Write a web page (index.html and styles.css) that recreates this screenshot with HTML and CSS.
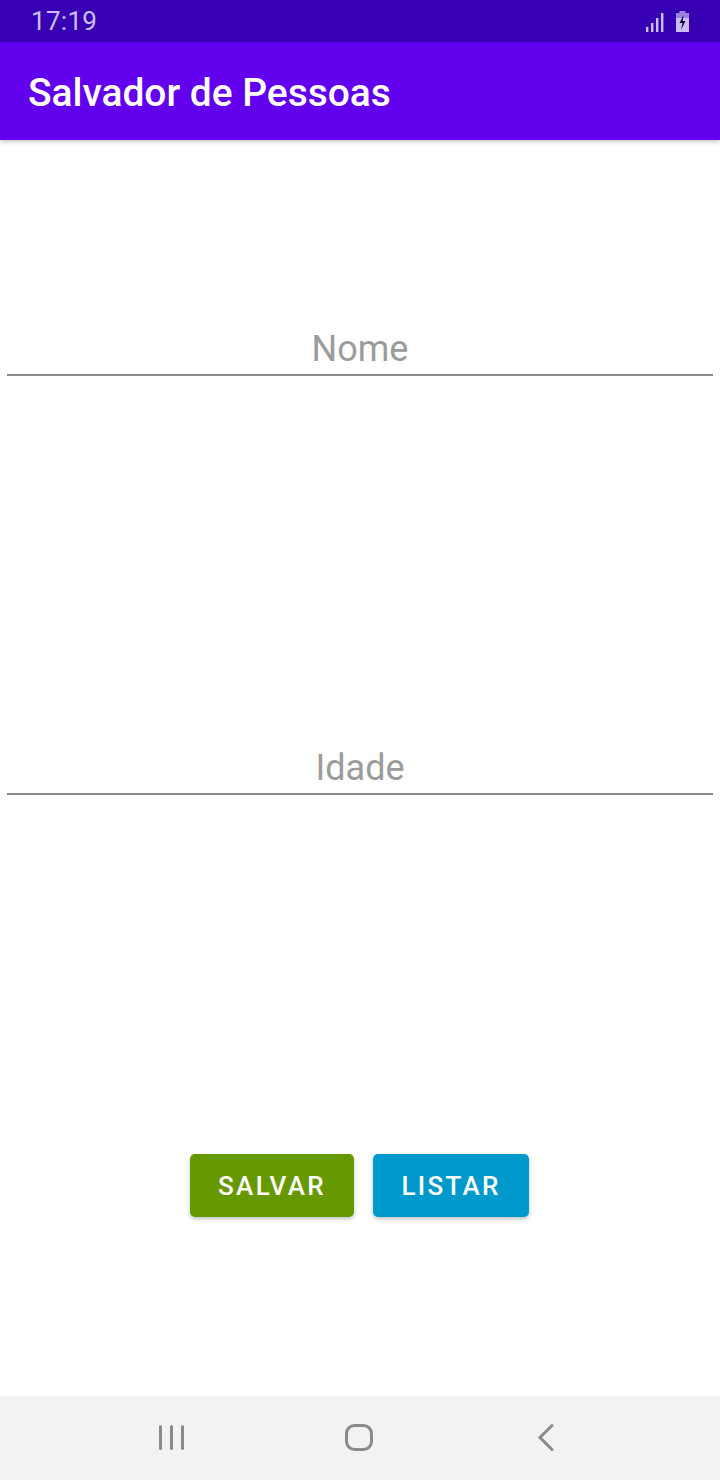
FILE: index.html
```html
<!DOCTYPE html>
<html lang="pt">
<head>
<meta charset="utf-8">
<title>Salvador de Pessoas</title>
<link rel="stylesheet" href="styles.css">
</head>
<body>
<div class="screen">
  <div class="statusbar">
    <span class="time">17:19</span>
    <div class="status-icons">
      <svg class="signal" width="19" height="20" viewBox="0 0 19 20">
        <rect x="1" y="15" width="2.4" height="5" fill="#cbbdf5"/>
        <rect x="6" y="11" width="2.4" height="9" fill="#cbbdf5"/>
        <rect x="11" y="6" width="2.4" height="14" fill="#cbbdf5"/>
        <rect x="16" y="1" width="2.4" height="19" fill="#cbbdf5"/>
      </svg>
      <svg class="battery" width="15" height="22" viewBox="0 0 15 22">
        <rect x="4.5" y="0" width="6" height="3" fill="#9a80e0"/>
        <rect x="1" y="2" width="13" height="5" fill="#9a80e0"/>
        <rect x="1" y="7" width="13" height="14" fill="#cbbdf5"/>
        <path d="M8.5 4 L4.5 12 H7.5 L6 19 L10.5 10 H7.8 Z" fill="#1a0a3a"/>
      </svg>
    </div>
  </div>
  <header class="appbar">
    <h1 class="title">Salvador de Pessoas</h1>
  </header>
  <main class="content">
    <div class="field field-nome"><span class="hint">Nome</span></div>
    <div class="field field-idade"><span class="hint">Idade</span></div>
    <div class="actions">
      <button class="btn btn-salvar">SALVAR</button>
      <button class="btn btn-listar">LISTAR</button>
    </div>
  </main>
  <nav class="navbar">
    <svg class="nav-icon" width="30" height="30" viewBox="0 0 30 30">
      <rect x="2" y="2" width="3" height="25" rx="1.5" fill="#8a8a8a"/>
      <rect x="13" y="2" width="3" height="25" rx="1.5" fill="#8a8a8a"/>
      <rect x="24" y="2" width="3" height="25" rx="1.5" fill="#8a8a8a"/>
    </svg>
    <svg class="nav-icon" width="30" height="30" viewBox="0 0 30 30">
      <rect x="2.5" y="2.5" width="25" height="24" rx="8" fill="none" stroke="#8a8a8a" stroke-width="3"/>
    </svg>
    <svg class="nav-icon" width="30" height="30" viewBox="0 0 30 30">
      <path d="M21 2.5 L9 14.5 L21 26.5" fill="none" stroke="#8a8a8a" stroke-width="3" stroke-linecap="round" stroke-linejoin="miter"/>
    </svg>
  </nav>
</div>
</body>
</html>
```

FILE: styles.css
```css
html, body {
  margin: 0;
  padding: 0;
  background: #ffffff;
}

.screen {
  width: 720px;
  height: 1480px;
  display: flex;
  flex-direction: column;
  font-family: Roboto, "Noto Sans", "Liberation Sans", sans-serif;
  overflow: hidden;
}

.statusbar {
  height: 42px;
  flex: 0 0 42px;
  background: #3700b3;
  display: flex;
  align-items: center;
  justify-content: space-between;
  padding: 0 30px 0 31px;
  box-sizing: border-box;
}

.time {
  color: #cbbdf5;
  font-size: 26px;
  line-height: 42px;
  letter-spacing: 0.3px;
}

.status-icons {
  display: flex;
  align-items: center;
  gap: 11px;
  padding-top: 2px;
}

.appbar {
  height: 98px;
  flex: 0 0 98px;
  background: #6200ee;
  display: flex;
  align-items: center;
  padding: 3px 0 0 28px;
  box-sizing: border-box;
  box-shadow: 0 2px 4px rgba(0, 0, 0, 0.22);
  position: relative;
  z-index: 1;
}

.title {
  margin: 0;
  color: #ffffff;
  font-size: 39px;
  font-weight: 500;
  line-height: 48px;
  letter-spacing: -0.05px;
}

.content {
  flex: 1 1 auto;
  display: flex;
  flex-direction: column;
  align-items: stretch;
  background: #ffffff;
}

.field {
  margin: 0 7px;
  border-bottom: 2px solid #8a8a8a;
  padding-bottom: 3px;
  text-align: center;
}

.field-nome {
  margin-top: 187px;
}

.field-idade {
  margin-top: 370px;
}

.hint {
  display: block;
  color: #9b9b9b;
  font-size: 36px;
  line-height: 44px;
}

.actions {
  margin-top: 359px;
  display: flex;
  justify-content: center;
  gap: 19px;
  padding-right: 1px;
}

.btn {
  height: 63px;
  border: none;
  border-radius: 5px;
  color: #ffffff;
  font-family: Roboto, "Noto Sans", "Liberation Sans", sans-serif;
  font-size: 26px;
  font-weight: 500;
  letter-spacing: 2.3px;
  box-shadow: 0 2px 4px rgba(0, 0, 0, 0.25);
  padding: 0;
  display: flex;
  align-items: center;
  justify-content: center;
}

.btn-salvar {
  width: 164px;
  background: #669900;
}

.btn-listar {
  width: 156px;
  background: #0099cc;
}

.navbar {
  height: 84px;
  flex: 0 0 84px;
  background: #f2f2f2;
  display: flex;
  align-items: center;
  justify-content: flex-start;
  gap: 157px;
  padding: 0 0 0 157px;
  box-sizing: border-box;
}

.nav-icon {
  display: block;
}
```
